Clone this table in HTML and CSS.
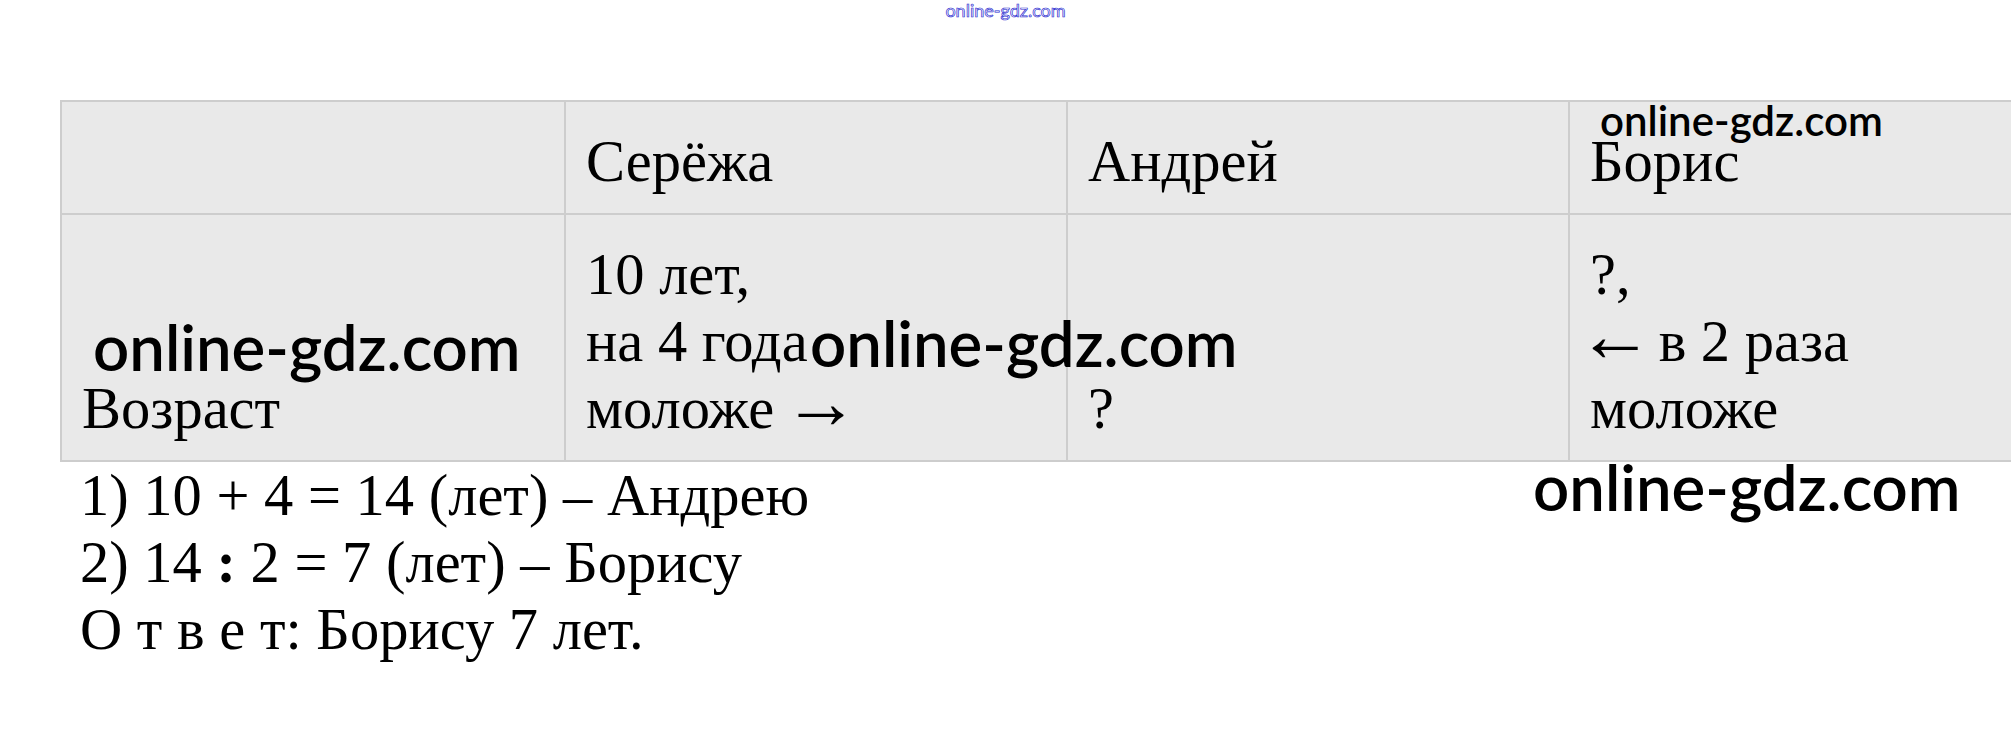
FILE: index.html
```html
<!DOCTYPE html>
<html lang="ru">
<head>
    <meta charset="UTF-8">
    <meta name="viewport" content="width=device-width, initial-scale=1.0">
    <title>Возраст: Серёжа, Андрей, Борис</title>
    <link rel="stylesheet" href="styles.css">
</head>
<body>
    <div class="page">
        <div class="siteMark">online-gdz.com</div>

        <table class="ages">
            <colgroup>
                <col class="colLabel">
                <col class="colName">
                <col class="colName">
                <col class="colName">
            </colgroup>
            <tr class="headRow">
                <td></td>
                <td>Серёжа</td>
                <td>Андрей</td>
                <td>Борис</td>
            </tr>
            <tr class="ageRow">
                <td>Возраст</td>
                <td>10 лет,<br>на 4 года<br>моложе <span class="arrow arrowRight">→</span></td>
                <td>?</td>
                <td>?,<br><span class="arrow arrowLeft">←</span> в 2 раза<br>моложе</td>
            </tr>
        </table>

        <div class="solution">
            <p>1) 10 + 4 = 14 (лет) – Андрею</p>
            <p>2) 14 <b>:</b> 2 = 7 (лет) – Борису</p>
            <p>О т в е т: Борису 7 лет.</p>
        </div>

        <!-- watermarks lying over the table -->
        <span class="watermark wmLeft">online-gdz.com</span>
        <span class="watermark wmMiddle">online-gdz.com</span>
        <span class="watermark wmSmall">online-gdz.com</span>
        <span class="watermark wmRight">online-gdz.com</span>
    </div>
</body>
</html>
```

FILE: styles.css
```css
body {
    margin: 0;
    padding: 0;
    background-color: #ffffff;
    overflow: hidden;
}

.page {
    position: relative;
    width: 2011px;
    height: 730px;
    font-family: "Liberation Serif", "Times New Roman", serif;
    color: #000000;
}

/* small blue site name at the very top */
.siteMark {
    height: 100px;
    text-align: center;
    font-family: Lato, "Noto Sans", sans-serif;
    font-size: 18px;
    line-height: 20px;
    color: #ffffff;
    -webkit-text-stroke: 0.7px #2b2bd0;
}

.ages {
    margin-left: 60px;
    width: 2012px;
    table-layout: fixed;
    border-collapse: collapse;
    background-color: #e9e9e9;
    font-size: 58.5px;
    line-height: 67px;
}

.colLabel {
    width: 504px;
}

.colName {
    width: 502px;
}

.ages td {
    border: 2px solid #cdcdcd;
    padding: 0 20px 18px 20px;
    vertical-align: bottom;
    white-space: nowrap;
}

.headRow td {
    height: 93px;
}

.ageRow td {
    height: 227px;
}

.arrow {
    font-size: 76px;
    line-height: 0;
}

.arrowRight {
    margin-left: -6px;
}

.arrowLeft {
    margin-left: -13px;
    margin-right: -9px;
}

.solution {
    padding-left: 20px;
    margin-left: 60px;
    font-size: 58.5px;
    line-height: 67px;
}

.solution p {
    margin: 0;
}

.watermark {
    position: absolute;
    font-family: Lato, "Noto Sans", sans-serif;
    font-weight: 600;
    font-size: 63.5px;
    line-height: 1;
    color: #000000;
    white-space: nowrap;
}

.wmLeft {
    left: 93px;
    top: 315px;
}

.wmMiddle {
    left: 810px;
    top: 311px;
}

.wmRight {
    left: 1533px;
    top: 455px;
}

.wmSmall {
    left: 1600px;
    top: 99px;
    font-size: 42px;
}
```
